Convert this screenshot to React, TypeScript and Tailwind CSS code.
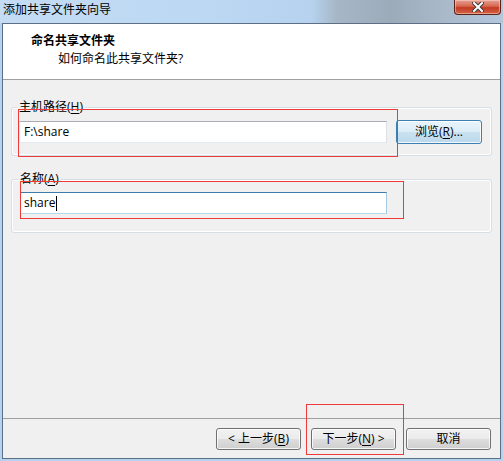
import React from "react";

// Win7 风格的按钮
function WinButton({
  children,
  className = "",
  primary = false,
}: {
  children: React.ReactNode;
  className?: string;
  primary?: boolean;
}) {
  const skin = primary
    ? "border-[#3c7fb1] bg-[linear-gradient(#e9f4fb_0%,#dcedf8_48%,#c9e2f2_52%,#bcd8ea_100%)]"
    : "border-[#707070] bg-[linear-gradient(#f2f2f2_0%,#ebebeb_48%,#dddddd_52%,#cfcfcf_100%)]";
  return (
    <div
      className={`flex items-center justify-center rounded-[3px] border text-[12px] leading-none text-black shadow-[inset_0_0_0_1px_rgba(255,255,255,0.8)] ${skin} ${className}`}
    >
      {children}
    </div>
  );
}

function Mn({ c }: { c: string }) {
  return <span className="underline decoration-1 underline-offset-[2px]">{c}</span>;
}

function GroupBox({
  label,
  labelLeft,
  className = "",
  children,
}: {
  label: React.ReactNode;
  labelLeft: string;
  className?: string;
  children: React.ReactNode;
}) {
  return (
    <div
      className={`relative mx-[8px] rounded-[3px] border border-[#d5dfe5] shadow-[inset_0_0_0_1px_#ffffff] ${className}`}
    >
      <span
        className={`absolute top-[-9px] ${labelLeft} bg-[#f0f0f0] px-[2px] text-[12px] leading-[16px] text-black`}
      >
        {label}
      </span>
      {children}
    </div>
  );
}

export default function App() {
  return (
    <div className="relative flex h-[461px] w-[503px] flex-col overflow-hidden bg-[#b6d2ee] font-['Open_Sans','Noto_Sans_CJK_SC',sans-serif]">
      {/* 标题栏 */}
      <div className="flex h-[23px] shrink-0 items-start justify-between bg-[linear-gradient(90deg,#c4dcf4_0%,#bcd8f3_40%,#b6d2ee_62%,#a6b6c6_67%,#9cabba_78%,#a9b9c9_88%,#b2c7dc_100%)]">
        <span className="pl-[3px] pt-[2px] text-[12px] leading-[16px] text-black">
          添加共享文件夹向导
        </span>
        <div className="mr-[2px] flex h-[15px] w-[47px] items-center justify-center rounded-b-[4px] border border-t-0 border-[#5a2219] bg-[linear-gradient(#e6a092_0%,#d6664f_45%,#c43a22_55%,#d3644a_100%)] shadow-[inset_0_0_0_1px_rgba(255,220,210,0.5)]">
          <svg width="12" height="10" viewBox="0 0 12 10">
            <path d="M2 1 L10 9 M10 1 L2 9" stroke="#3a3a3a" strokeWidth="4" strokeLinecap="square" />
            <path d="M2 1 L10 9 M10 1 L2 9" stroke="#ffffff" strokeWidth="2" strokeLinecap="square" />
          </svg>
        </div>
      </div>

      {/* 窗口客户区 */}
      <div className="mx-[2px] flex flex-1 flex-col border border-[#5d6f85] bg-[#f0f0f0]">
        {/* 页眉 */}
        <div className="h-[56px] shrink-0 border-b border-[#a0a0a0] bg-white pt-[9px]">
          <div className="pl-[28px] text-[12px] font-bold leading-[16px] text-black">
            命名共享文件夹
          </div>
          <div className="mt-[2px] pl-[55px] text-[12px] leading-[16px] text-black">
            如何命名此共享文件夹?
          </div>
        </div>

        {/* 主体 */}
        <div className="flex-1">
          <GroupBox
            className="mt-[27px] pb-[11px] pl-[7px] pt-[12px]"
            labelLeft="left-[5px]"
            label={
              <>
                主机路径(<Mn c="H" />)
              </>
            }
          >
            <div className="flex items-center">
              <div className="flex h-[22px] w-[368px] items-center border border-[#abadb3] border-b-[#e3e9ef] border-l-[#e2e3ea] border-r-[#dbdfe6] bg-white pl-[4px] text-[12px] text-black">
                F:\share
              </div>
              <WinButton primary className="ml-[9px] h-[24px] w-[86px]">
                浏览(<Mn c="R" />)...
              </WinButton>
            </div>
          </GroupBox>

          <GroupBox
            className="mt-[23px] pb-[18px] pl-[8px] pt-[12px]"
            labelLeft="left-[6px]"
            label={
              <>
                名称(<Mn c="A" />)
              </>
            }
          >
            <div className="flex h-[22px] w-[367px] items-center border border-[#3d7bad] border-b-[#b7d9ed] border-l-[#a4c9e3] border-r-[#a4c9e3] bg-white pl-[3px] text-[12px] text-black">
              share
              <span className="ml-[1px] h-[15px] w-[1px] bg-black" />
            </div>
          </GroupBox>
        </div>

        {/* 底部按钮 */}
        <div className="flex h-[40px] shrink-0 items-start justify-end gap-[10px] border-t border-[#a0a0a0] pr-[9px] pt-[9px]">
          <WinButton className="h-[22px] w-[85px]">
            &lt; 上一步(<Mn c="B" />)
          </WinButton>
          <WinButton className="h-[22px] w-[85px]">
            下一步(<Mn c="N" />) &gt;
          </WinButton>
          <WinButton className="h-[22px] w-[85px]">取消</WinButton>
        </div>
      </div>
      <div className="h-[2px] shrink-0" />

      {/* 红色标注框 */}
      <div className="pointer-events-none absolute left-[18px] top-[109px] h-[48px] w-[380px] border border-[#ef3a3a]" />
      <div className="pointer-events-none absolute left-[20px] top-[181px] h-[38px] w-[384px] border border-[#ef3a3a]" />
      <div className="pointer-events-none absolute left-[306px] top-[404px] h-[51px] w-[98px] border border-[#ef3a3a]" />
    </div>
  );
}
